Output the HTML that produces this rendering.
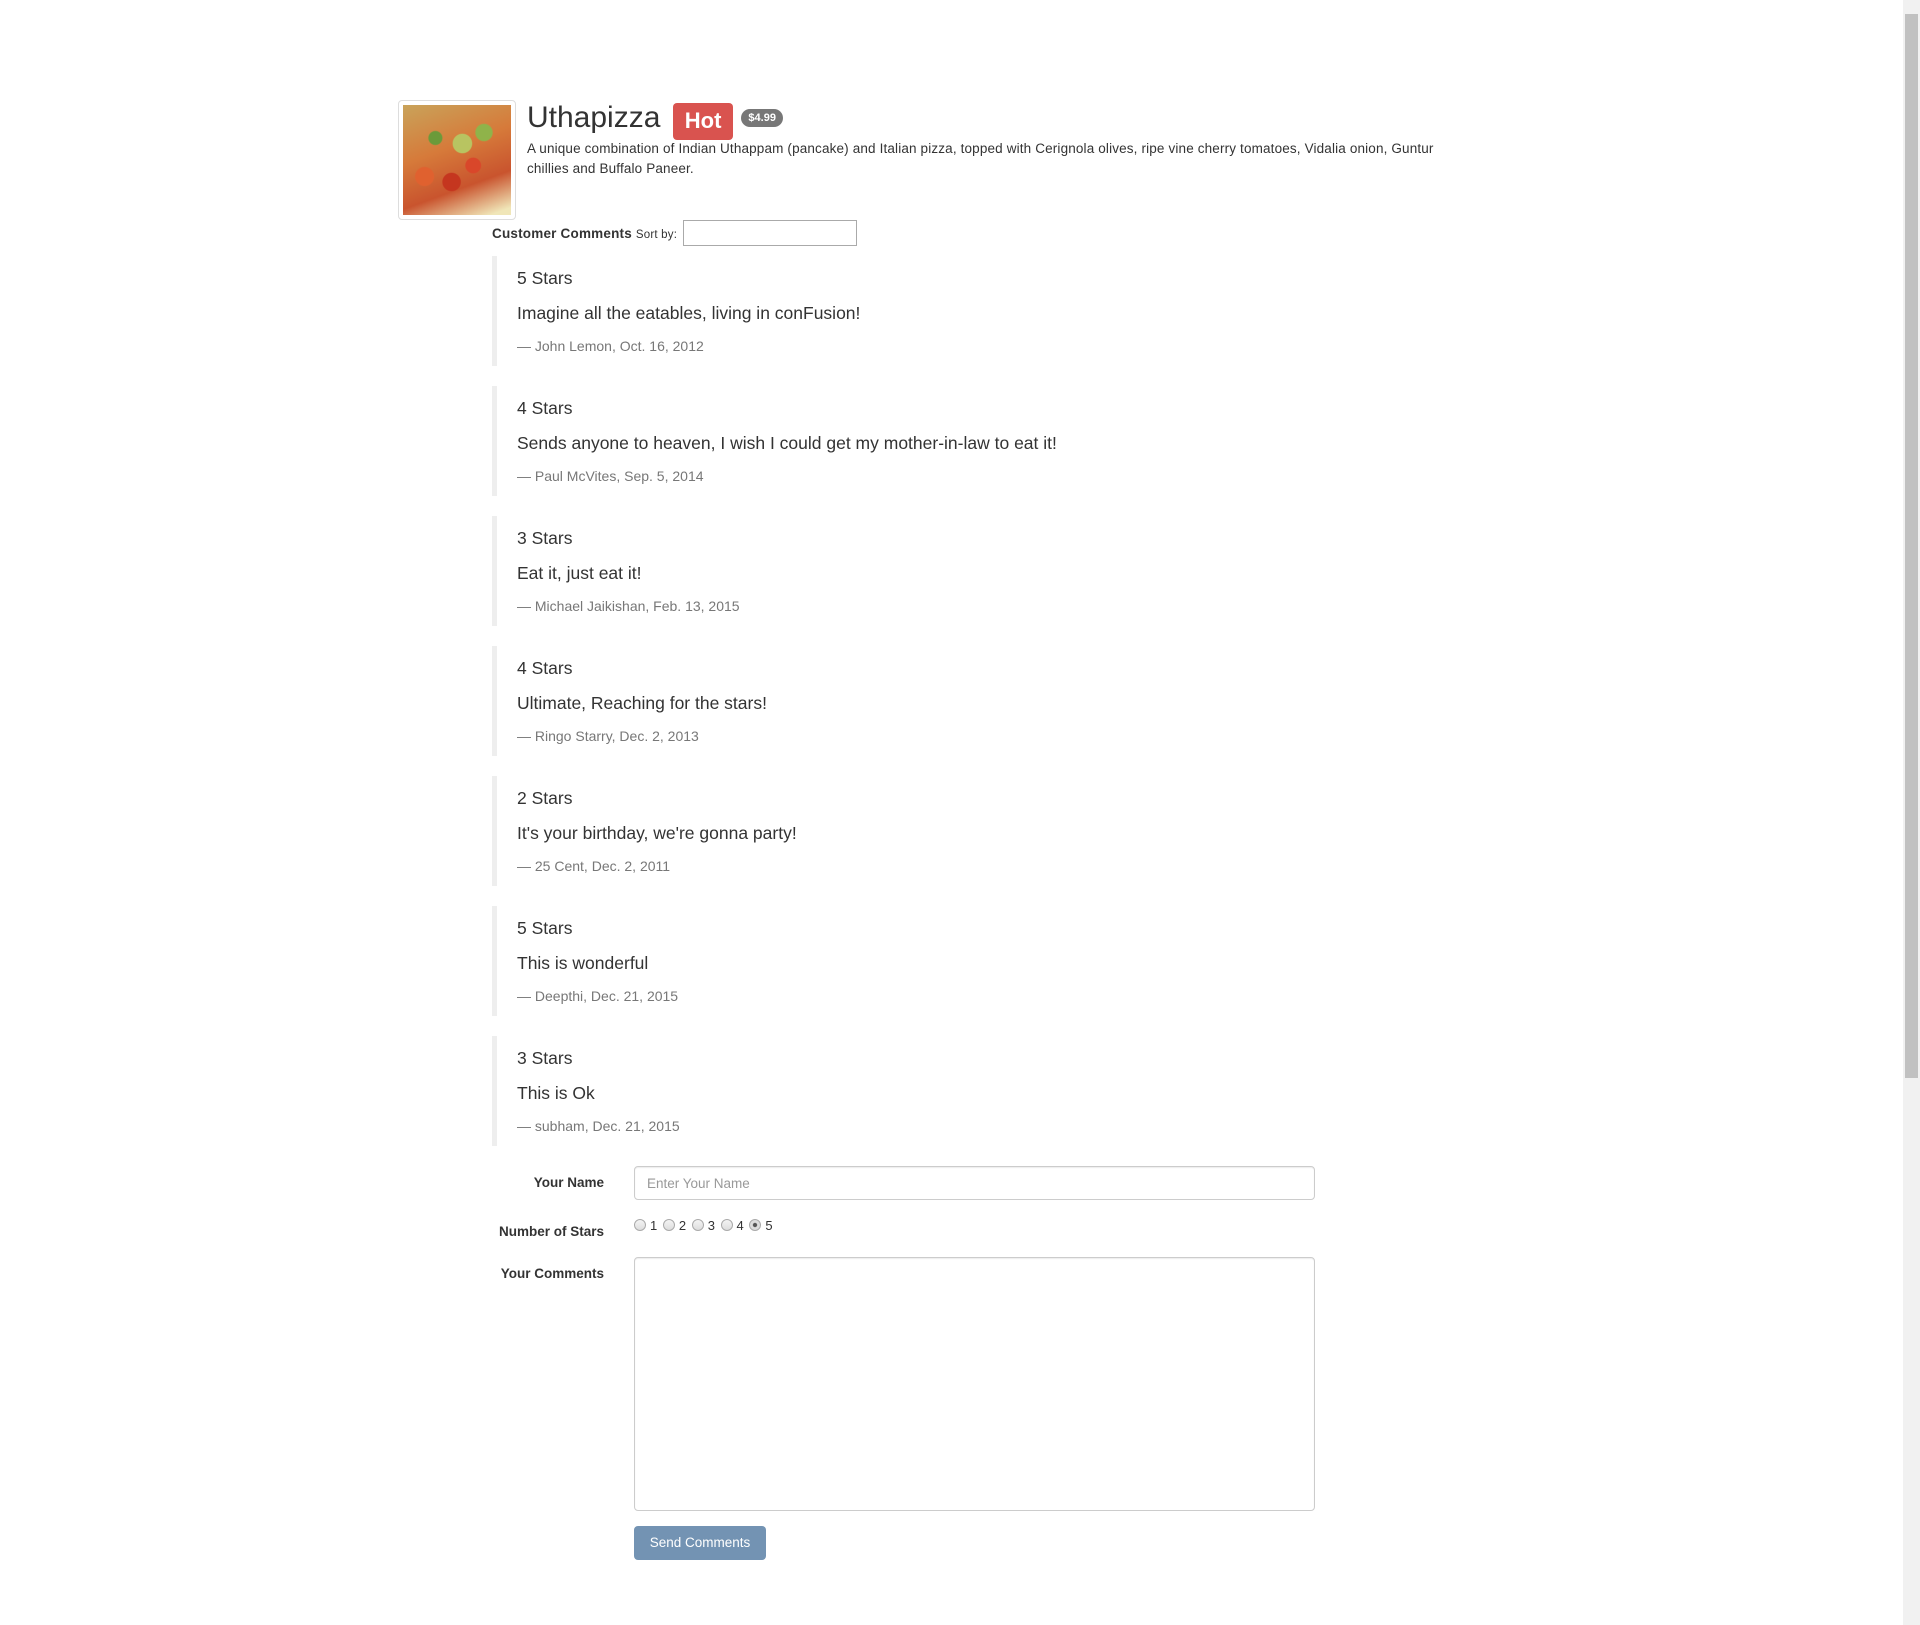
<!DOCTYPE html>
<html><head><meta charset="utf-8"><style>
*{box-sizing:border-box}
body{margin:0;width:1920px;height:1625px;background:#fff;font-family:"Liberation Sans",Arial,sans-serif;font-size:14px;line-height:1.42857;color:#333;position:relative;overflow:hidden}
.abs{position:absolute}
.thumb{left:398px;top:100px;width:118px;height:120px;border:1px solid #ddd;border-radius:4px;padding:4px;background:#fff}
.pizza{width:100%;height:100%;background:
radial-gradient(circle at 30% 30%,#6b9a3a 0 6%,transparent 7%),
radial-gradient(circle at 65% 55%,#d9472a 0 8%,transparent 9%),
radial-gradient(circle at 45% 70%,#c5361f 0 9%,transparent 10%),
radial-gradient(circle at 75% 25%,#8fb34a 0 7%,transparent 8%),
radial-gradient(circle at 20% 65%,#e0612f 0 8%,transparent 9%),
radial-gradient(circle at 55% 35%,#b8c461 0 10%,transparent 11%),
linear-gradient(160deg,#c9a35a,#d67a3a 40%,#c9542e 70%,#f0e6b8 95%)}
h1{margin:0;font-weight:500;font-size:30px;line-height:1.1;color:#333;white-space:nowrap}
.hot{display:inline-block;background:#d9534f;color:#fff;font-weight:bold;font-size:22px;padding:6px 12px 7px;border-radius:4px;vertical-align:-1px;margin-left:4px;line-height:1.1}
.badge{display:inline-block;background:#777;color:#fff;font-weight:bold;font-size:11px;padding:3px 7px;border-radius:10px;vertical-align:6px;margin-left:8px;line-height:1.1}
.desc{font-size:13.5px;line-height:20px;margin-top:-1px;width:945px;letter-spacing:0.15px}
.bq{position:absolute;left:492px;width:900px;height:110px;border-left:5px solid #eee;padding:10px 20px;font-size:17.5px}
.bq p{margin:0 0 10px;line-height:25px}
.bq .f{font-size:14px;color:#777;line-height:20px}
label{font-weight:bold;font-size:13.5px}
.lab{position:absolute;width:200px;text-align:right;left:404px}
.inp{position:absolute;left:634px;width:681px;border:1px solid #ccc;border-radius:4px;box-shadow:inset 0 1px 1px rgba(0,0,0,.075);background:#fff}
.radio{display:inline-block;width:12px;height:12px;border:1px solid #aaa;border-radius:50%;background:linear-gradient(#f4f4f4,#ddd);vertical-align:-1px;margin-right:4px;margin-left:2px}
.sb{right:0;top:0;width:17px;height:1625px;background:#f1f1f1}
</style></head><body>
<div class="abs thumb"><div class="pizza"></div></div>
<div class="abs" style="left:527px;top:101px">
<h1>Uthapizza <span class="hot">Hot</span><span class="badge">$4.99</span></h1>
<div class="desc">A unique combination of Indian Uthappam (pancake) and Italian pizza, topped with Cerignola olives, ripe vine cherry tomatoes, Vidalia onion, Guntur chillies and Buffalo Paneer.</div>
</div>
<div class="abs" style="left:492px;top:224px;font-size:13.5px;letter-spacing:0.2px"><b>Customer Comments</b> <span style="font-size:11.5px">Sort by:</span></div>
<div class="abs" style="left:683px;top:220px;width:174px;height:26px;border:1px solid #aaa"></div>

<div class="bq" style="top:256px"><p>5 Stars</p><p>Imagine all the eatables, living in conFusion!</p><div class="f">— John Lemon, Oct. 16, 2012</div></div>
<div class="bq" style="top:386px"><p>4 Stars</p><p>Sends anyone to heaven, I wish I could get my mother-in-law to eat it!</p><div class="f">— Paul McVites, Sep. 5, 2014</div></div>
<div class="bq" style="top:516px"><p>3 Stars</p><p>Eat it, just eat it!</p><div class="f">— Michael Jaikishan, Feb. 13, 2015</div></div>
<div class="bq" style="top:646px"><p>4 Stars</p><p>Ultimate, Reaching for the stars!</p><div class="f">— Ringo Starry, Dec. 2, 2013</div></div>
<div class="bq" style="top:776px"><p>2 Stars</p><p>It's your birthday, we're gonna party!</p><div class="f">— 25 Cent, Dec. 2, 2011</div></div>
<div class="bq" style="top:906px"><p>5 Stars</p><p>This is wonderful</p><div class="f">— Deepthi, Dec. 21, 2015</div></div>
<div class="bq" style="top:1036px"><p>3 Stars</p><p>This is Ok</p><div class="f">— subham, Dec. 21, 2015</div></div>

<label class="lab" style="top:1173px">Your Name</label>
<div class="inp" style="top:1166px;height:34px;padding:7px 12px;color:#999;font-size:13.5px">Enter Your Name</div>
<label class="lab" style="top:1222px">Number of Stars</label>
<div class="abs" style="left:632px;top:1217px;font-size:13px"><span class="radio"></span>1 <span class="radio"></span>2 <span class="radio"></span>3 <span class="radio"></span>4 <span class="radio" style="background:radial-gradient(#555 0 25%,#ddd 35%)"></span>5</div>
<label class="lab" style="top:1264px">Your Comments</label>
<div class="inp" style="top:1257px;height:254px"></div>
<div class="abs" style="left:634px;top:1526px;width:132px;height:34px;background:#7393b3;border-radius:4px;color:#fff;font-size:13.5px;text-align:center;line-height:34px">Send Comments</div>

<div class="abs sb"><div style="position:absolute;left:2px;top:14px;width:13px;height:1064px;background:#c1c1c1"></div></div>
</body></html>
